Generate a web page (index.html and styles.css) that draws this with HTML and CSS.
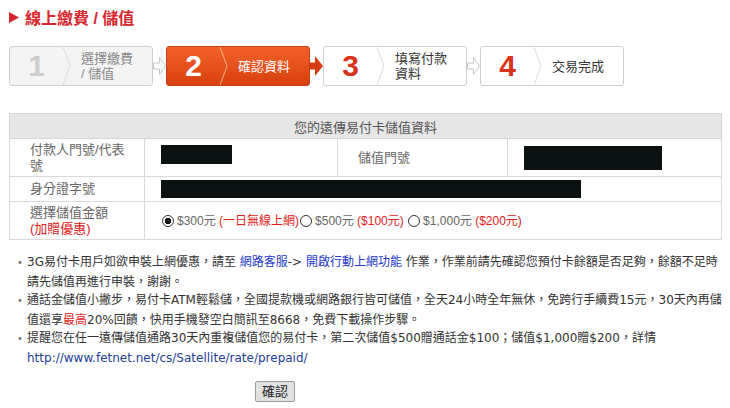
FILE: index.html
```html
<!DOCTYPE html>
<html lang="zh-Hant">

<head>
    <meta charset="utf-8">
    <title>線上繳費 / 儲值</title>
    <link rel="stylesheet" href="styles.css">
</head>

<body>
    <h1 class="page-title">
        <svg class="title-mark" width="10" height="11" viewBox="0 0 10 11"><polygon points="0,0 10,5.5 0,11" fill="#d7262e"/></svg>
        <span>線上繳費 / 儲值</span>
    </h1>

    <ol class="steps">
        <li class="step step-done">
            <span class="step-num">1</span>
            <svg class="step-divider" viewBox="0 0 8 38"><polyline points="0,0 7,19 0,38" fill="none" stroke="#dcdcdc"/></svg>
            <span class="step-text">選擇繳費<br>/ 儲值</span>
        </li>
        <li class="step-arrow">
            <svg width="13" height="20" viewBox="0 0 13 20"><polygon points="0.5,7 6.5,7 6.5,1.5 12.5,10 6.5,18.5 6.5,13 0.5,13" fill="#fff" stroke="#c8c8c8"/></svg>
        </li>
        <li class="step step-current">
            <span class="step-num">2</span>
            <svg class="step-divider" viewBox="0 0 8 38"><polyline points="0,0 7,19 0,38" fill="none" stroke="#f7b08f"/></svg>
            <span class="step-text">確認資料</span>
        </li>
        <li class="step-arrow">
            <svg width="13" height="22" viewBox="0 0 13 22"><polygon points="0,7.5 5,7.5 5,1 13,11 5,21 5,14.5 0,14.5" fill="#d63c10"/></svg>
        </li>
        <li class="step">
            <span class="step-num">3</span>
            <svg class="step-divider" viewBox="0 0 8 38"><polyline points="0,0 7,19 0,38" fill="none" stroke="#dcdcdc"/></svg>
            <span class="step-text">填寫付款<br>資料</span>
        </li>
        <li class="step-arrow">
            <svg width="13" height="20" viewBox="0 0 13 20"><polygon points="0.5,7 6.5,7 6.5,1.5 12.5,10 6.5,18.5 6.5,13 0.5,13" fill="#fff" stroke="#c8c8c8"/></svg>
        </li>
        <li class="step">
            <span class="step-num">4</span>
            <svg class="step-divider" viewBox="0 0 8 38"><polyline points="0,0 7,19 0,38" fill="none" stroke="#dcdcdc"/></svg>
            <span class="step-text">交易完成</span>
        </li>
    </ol>

    <table class="info-table">
        <colgroup>
            <col class="col-label">
            <col class="col-value">
            <col class="col-label2">
            <col class="col-value2">
        </colgroup>
        <tr>
            <th colspan="4">您的遠傳易付卡儲值資料</th>
        </tr>
        <tr class="row-tall">
            <td class="label">付款人門號/代表號</td>
            <td><span class="mask mask-phone"></span></td>
            <td class="label">儲值門號</td>
            <td><span class="mask mask-store"></span></td>
        </tr>
        <tr class="row-short">
            <td class="label">身分證字號</td>
            <td colspan="3"><span class="mask mask-id"></span></td>
        </tr>
        <tr class="row-tall">
            <td class="label">選擇儲值金額<br><span class="red">(加贈優惠)</span></td>
            <td colspan="3" class="amounts">
                <label class="amount"><input type="radio" name="amount" checked>$300元 <span class="red">(一日無線上網)</span></label><label class="amount"><input type="radio" name="amount">$500元 <span class="red">($100元)</span></label>
                <label class="amount"><input type="radio" name="amount">$1,000元 <span class="red">($200元)</span></label>
            </td>
        </tr>
    </table>

    <ul class="notes">
        <li>3G易付卡用戶如欲申裝上網優惠，請至 <a href="#">網路客服</a>-&gt; <a href="#">開啟行動上網功能</a> 作業，作業前請先確認您預付卡餘額是否足夠，餘額不足時<br>請先儲值再進行申裝，謝謝。</li>
        <li>通話金儲值小撇步，易付卡ATM輕鬆儲，全國提款機或網路銀行皆可儲值，全天24小時全年無休，免跨行手續費15元，30天內再儲<br>值還享<span class="red">最高</span>20%回饋，快用手機發空白簡訊至8668，免費下載操作步驟。</li>
        <li>提醒您在任一遠傳儲值通路30天內重複儲值您的易付卡，第二次儲值$500贈通話金$100；儲值$1,000贈$200，詳情<br><a class="url" href="#">http://www.fetnet.net/cs/Satellite/rate/prepaid/</a></li>
    </ul>

    <div class="actions">
        <button class="submit-button">確認</button>
    </div>
</body>

</html>
```

FILE: styles.css
```css
body {
    margin: 0;
    padding: 8px 9px;
    font-family: "Liberation Sans", "Noto Sans CJK TC", sans-serif;
    color: #333;
    background-color: #fff;
}

.page-title {
    display: flex;
    align-items: center;
    gap: 6px;
    height: 18px;
    margin: 0;
    font-size: 16px;
    font-weight: bold;
    color: #d7262e;
}

/* steps */

.steps {
    display: flex;
    height: 40px;
    margin: 20px 0 0 0;
    padding: 0;
    list-style: none;
}

.step {
    display: flex;
    align-items: center;
    width: 144px;
    box-sizing: border-box;
    border: 1px solid #cfcfcf;
    border-radius: 3px;
    background-color: #fff;
}

.step-num {
    width: 53px;
    text-align: center;
    font-family: "Liberation Sans", sans-serif;
    font-size: 30px;
    font-weight: bold;
    color: #d8321b;
}

.step-divider {
    width: 8px;
    height: 38px;
}

.step-text {
    margin-left: 10px;
    font-size: 13px;
    line-height: 15px;
    color: #333;
}

.step-done {
    background-color: #f4f4f4;
}

.step-done .step-num {
    color: #cdcdcd;
}

.step-done .step-text {
    color: #888;
}

.step-current {
    border-color: #c93d12;
    background: linear-gradient(#f2622a, #d8400f);
}

.step-current .step-num,
.step-current .step-text {
    color: #fff;
}

.step-arrow {
    display: flex;
    align-items: center;
    width: 13px;
}

/* table */

.info-table {
    width: 713px;
    margin-top: 27px;
    border-collapse: collapse;
    table-layout: fixed;
    border: 1px solid #d5d5d5;
    font-size: 13px;
    color: #666;
}

.col-label {
    width: 135px;
}

.col-value {
    width: 193px;
}

.col-label2 {
    width: 170px;
}

.info-table th {
    height: 24px;
    padding: 0;
    background-color: #e6e6e6;
    border: 1px solid #d5d5d5;
    font-weight: normal;
    color: #555;
}

.info-table td {
    padding: 0 16px;
    border: 1px solid #dadada;
    line-height: 16px;
}

.info-table td.label {
    padding: 0 8px 0 20px;
}

.row-tall {
    height: 38px;
}

.row-short {
    height: 25px;
}

.mask {
    display: inline-block;
    vertical-align: middle;
    background-color: #0b1010;
}

.mask-phone {
    width: 71px;
    height: 19px;
    margin-bottom: 7px;
}

.mask-store {
    width: 138px;
    height: 24px;
}

.mask-id {
    width: 420px;
    height: 18px;
}

.red {
    color: #e0201a;
}

.amounts {
    font-size: 12px;
}

.amount {
    white-space: nowrap;
}

.amount input {
    appearance: none;
    width: 12px;
    height: 12px;
    margin: 0 3px 0 1px;
    vertical-align: -2px;
    border: 1px solid #333;
    border-radius: 50%;
    background-color: #fff;
}

.amount input:checked {
    background: radial-gradient(circle, #111 0 3px, #fff 3.5px);
}

/* notes */

.notes {
    width: 700px;
    margin: 13px 0 0 0;
    padding-left: 18px;
    list-style: none;
    font-family: "DejaVu Sans", "Noto Sans CJK TC", sans-serif;
    font-size: 12px;
    line-height: 18.6px;
    color: #333;
    white-space: nowrap;
}

.notes li::before {
    content: "•";
    display: inline-block;
    width: 10px;
    margin-left: -10px;
    font-size: 10px;
    color: #777;
}

.notes a {
    color: #2438c8;
    text-decoration: none;
}

.notes a.url {
    color: #1d3d96;
}

.actions {
    margin: 13px 0 0 246px;
}

.submit-button {
    width: 40px;
    height: 21px;
    padding: 0;
    background-color: #e1e1e1;
    border: 1px solid #999;
    border-radius: 2px;
    font-family: "Noto Sans CJK TC", sans-serif;
    font-size: 13px;
    line-height: 18px;
    color: #222;
}
```
